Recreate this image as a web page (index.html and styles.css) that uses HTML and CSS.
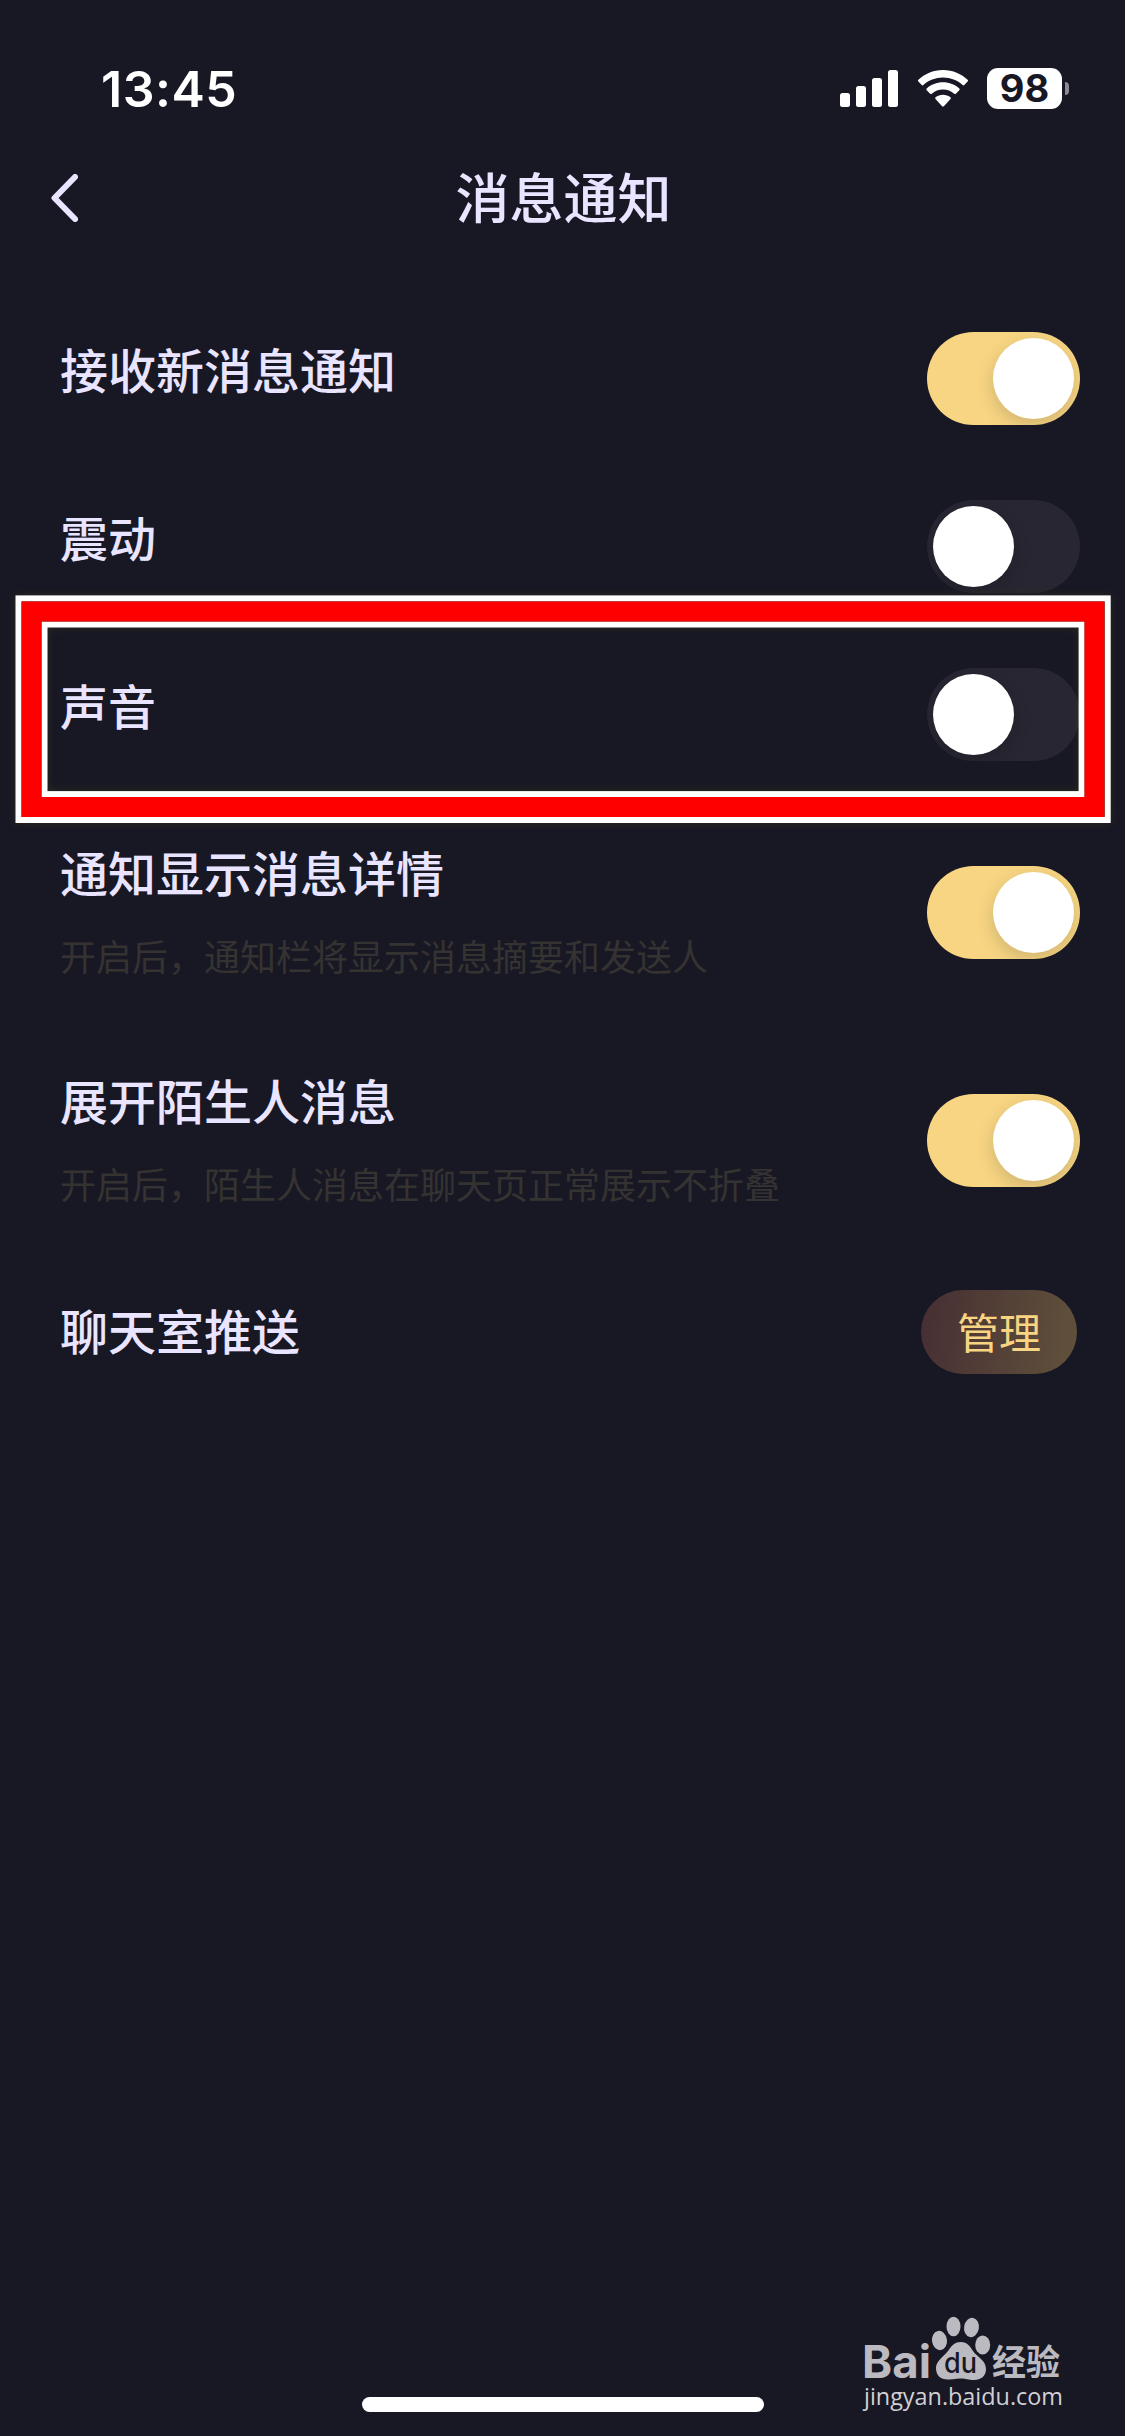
FILE: index.html
```html
<!DOCTYPE html>
<html lang="zh-CN">
<head>
<meta charset="utf-8">
<title>消息通知</title>
<link rel="stylesheet" href="styles.css">
</head>
<body>
<div class="screen">
  <header class="status">
    <span class="time">13:45</span>
    <div class="status-icons">
      <svg class="signal" width="58" height="37" viewBox="0 0 58 37">
        <rect x="0" y="23" width="10" height="14" rx="2.5"/><rect x="16" y="16" width="10" height="21" rx="2.5"/><rect x="32" y="8" width="10" height="29" rx="2.5"/><rect x="48" y="0" width="10" height="37" rx="2.5"/>
      </svg>
      <svg class="wifi" width="50" height="37" viewBox="0 0 50 37">
        <path d="M25 0C35 0 43.500 4 49.600 9.800Q50.500 10.700 49.600 11.600L46.300 15Q45.500 15.800 44.600 15C39.500 10.300 32.500 7.500 25 7.500S10.500 10.300 5.400 15Q4.500 15.800 3.700 15L.4 11.600Q-.5 10.700 .4 9.800C6.500 4 15 0 25 0Z"/>
        <path d="M25 12.300C31.400 12.300 37 14.600 41.300 18.500Q42.200 19.300 41.300 20.200L37.900 23.700Q37 24.500 36.200 23.700C33.200 21.200 29.300 19.600 25 19.600S16.800 21.200 13.800 23.700Q13 24.500 12.100 23.700L8.700 20.200Q7.800 19.300 8.700 18.500C13 14.600 18.600 12.300 25 12.300Z"/>
        <path d="M25 24.700C27.800 24.700 30.500 25.600 32.500 27.300Q33.200 28 32.500 28.900L25.900 36.200Q25 37 24.100 36.200L17.500 28.900Q16.800 28 17.500 27.300C19.500 25.600 22.200 24.700 25 24.700Z"/>
      </svg>
      <div class="battery"><span class="level">98</span><i class="cap"></i></div>
    </div>
  </header>
  <nav class="navbar">
    <svg class="back" width="27" height="48" viewBox="0 0 27 48"><path d="M24 3L3.500 24L24 45"/></svg>
    <h1 class="title">消息通知</h1>
  </nav>
  <main class="list">
    <div class="row"><span class="label">接收新消息通知</span><span class="switch on"><i class="knob"></i></span></div>
    <div class="row"><span class="label">震动</span><span class="switch"><i class="knob"></i></span></div>
    <div class="row">
      <span class="label">声音</span><span class="switch"><i class="knob"></i></span>
      <svg class="marker" width="1125" height="240" viewBox="0 0 1125 240">
        <rect class="edge" x="18.500" y="7.400" width="1089.200" height="221.600"/>
        <rect class="edge" x="44.500" y="33.500" width="1037.100" height="169.600"/>
        <rect class="band" x="31.500" y="20.500" width="1063" height="195.500"/>
      </svg>
    </div>
    <div class="row tall">
      <div class="texts"><span class="label">通知显示消息详情</span><span class="hint">开启后，通知栏将显示消息摘要和发送人</span></div>
      <span class="switch on"><i class="knob"></i></span>
    </div>
    <div class="row tall">
      <div class="texts"><span class="label">展开陌生人消息</span><span class="hint">开启后，陌生人消息在聊天页正常展示不折叠</span></div>
      <span class="switch on"><i class="knob"></i></span>
    </div>
    <div class="row last"><span class="label">聊天室推送</span><button class="manage">管理</button></div>
  </main>
  <svg class="watermark" width="210" height="100" viewBox="0 0 210 100">
    <g class="logo">
      <text class="bai" x="2" y="63" textLength="69" lengthAdjust="spacingAndGlyphs">Bai</text>
      <ellipse cx="79.500" cy="25.500" rx="7.500" ry="9.700" transform="rotate(-8 79.500 25.500)"/>
      <ellipse cx="93.500" cy="11.500" rx="7" ry="9.800"/>
      <ellipse cx="111.500" cy="12.500" rx="7.400" ry="9.700" transform="rotate(10 111.500 12.500)"/>
      <ellipse cx="122.700" cy="30" rx="7.500" ry="9.500"/>
      <path d="M101 27C107 27 110 31 113 36C117 42 126 45 126 54C126 61 121 65 114 65C108 65 106 63.500 101 63.500S94 64.500 88 64.500C80 64.500 76 60 76 53C76 46 83 42 88 36C92 30 95 27 101 27Z"/>
      <text class="du" x="84" y="58" textLength="33" lengthAdjust="spacingAndGlyphs">du</text>
      <text class="jy" x="132" y="60" textLength="68" lengthAdjust="spacingAndGlyphs">经验</text>
    </g>
    <text class="url" x="4" y="90" textLength="199" lengthAdjust="spacingAndGlyphs">jingyan.baidu.com</text>
  </svg>
  <div class="home"></div>
</div>
</body>
</html>
```
FILE: styles.css
```css
* { box-sizing: border-box; }
body { margin: 0; background: #181724; }
.screen {
  position: relative;
  width: 1125px;
  height: 2436px;
  overflow: hidden;
  background: #181724;
  color: #e9e4ff;
  font-family: "Noto Sans CJK SC", sans-serif;
  display: flex;
  flex-direction: column;
}
.status {
  height: 150px;
  padding: 28px 56px 0 101px;
  display: flex;
  justify-content: space-between;
  align-items: flex-start;
  color: #fff;
}
.time { font: 600 50px/122px Inter, sans-serif; letter-spacing: 0.5px; }
.status-icons { display: flex; align-items: flex-start; padding-top: 40px; }
.status-icons svg { fill: #fff; margin-top: 2px; }
.wifi { margin-left: 20px; }
.battery { display: flex; align-items: center; gap: 3px; margin-left: 19px; }
.level {
  width: 75px;
  height: 41px;
  border-radius: 11px;
  background: #fff;
  color: #181724;
  font: 700 38px/41px Inter, sans-serif;
  text-align: center;
}
.cap { width: 4px; height: 13px; border-radius: 0 4px 4px 0; background: #8b8a92; }
.navbar {
  height: 96px;
  display: grid;
  grid-template-columns: 78px 1fr 78px;
  align-items: center;
}
.back { justify-self: end; fill: none; stroke: #e9e4ff; stroke-width: 6; stroke-linecap: round; stroke-linejoin: round; }
.title { margin: 0; padding: 0 0 4px 2px; text-align: center; font-size: 54px; font-weight: 500; line-height: 80px; }
.list { padding-top: 48px; flex: 1; }
.row {
  position: relative;
  height: 168px;
  padding: 0 45px 0 60px;
  display: flex;
  align-items: center;
  justify-content: space-between;
}
.label { font-size: 48px; font-weight: 500; line-height: 72px; padding-bottom: 20px; }
.tall { height: 228px; }
.texts { display: flex; flex-direction: column; padding-bottom: 7px; }
.hint { font-size: 36px; line-height: 54px; color: #353331; }
.tall .label { padding-bottom: 21px; }
.last { height: 156px; padding-right: 48px; }
.last .label { padding-bottom: 6px; }
.switch {
  width: 153px;
  height: 93px;
  padding: 6px;
  border-radius: 47px;
  overflow: hidden;
  background: #272632;
  display: flex;
}
.switch.on { background: #f7d583; justify-content: flex-end; }
.knob { width: 81px; height: 81px; border-radius: 50%; background: #fff; box-shadow: 0 6px 18px rgba(0, 0, 0, 0.16); }
.manage {
  width: 156px;
  height: 84px;
  padding: 0 0 2px;
  border: 0;
  border-radius: 42px;
  background: linear-gradient(100deg, #462e33, #61523b);
  color: #f7d583;
  font: 400 42px/82px "Noto Sans CJK SC", sans-serif;
}
.marker { position: absolute; left: 0; top: -39px; z-index: 1; filter: drop-shadow(0 0 4px rgba(60, 70, 20, 0.45)); }
.edge { fill: none; stroke: #fff; stroke-width: 6; }
.band { fill: none; stroke: #f00; stroke-width: 20; }
.watermark { position: absolute; left: 860px; top: 2315px; }
.logo { fill: #bbbac0; }
.bai { font: 700 45px Inter, sans-serif; }
.du { font: 500 28px Inter, sans-serif; fill: #181724; }
.jy { font: 700 35px "Noto Sans CJK SC", sans-serif; }
.url { font: 400 24px "Open Sans", sans-serif; fill: #d0d0d4; }
.home { position: absolute; left: 362px; top: 2397px; width: 402px; height: 15px; border-radius: 8px; background: #fff; }
```
